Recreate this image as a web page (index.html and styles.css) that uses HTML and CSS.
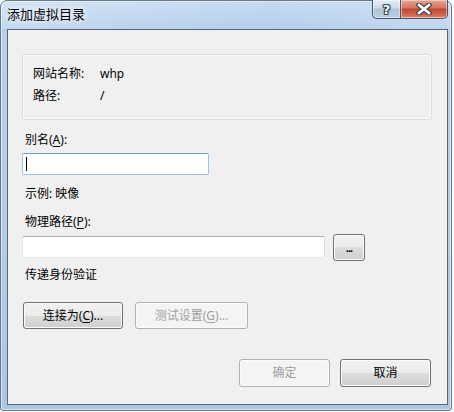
FILE: index.html
```html
<!DOCTYPE html>
<html lang="zh-CN">
<head>
<meta charset="utf-8">
<title>添加虚拟目录</title>
<link rel="stylesheet" href="styles.css">
</head>
<body>
<div class="window">
  <div class="titlebar">
    <span class="title">添加虚拟目录</span>
    <div class="caption-buttons">
      <div class="cap-btn help"><span class="help-glyph">?</span></div>
      <div class="cap-btn close">
        <svg width="16" height="12" viewBox="0 0 16 12">
          <path d="M3 2 L13 10 M13 2 L3 10" stroke="#3b4654" stroke-width="5" stroke-linecap="square" fill="none"/>
          <path d="M3 2 L13 10 M13 2 L3 10" stroke="#ffffff" stroke-width="2.6" stroke-linecap="square" fill="none"/>
        </svg>
      </div>
    </div>
  </div>
  <div class="client">
    <div class="groupbox">
      <div class="info-row"><span class="info-label">网站名称:</span><span class="info-value">whp</span></div>
      <div class="info-row"><span class="info-label">路径:</span><span class="info-value">/</span></div>
    </div>
    <div class="label first">别名(<u>A</u>):</div>
    <div class="textbox focused"><span class="caret"></span></div>
    <div class="label example">示例: 映像</div>
    <div class="label path-label">物理路径(<u>P</u>):</div>
    <div class="path-row">
      <div class="textbox path"></div>
      <div class="btn browse">...</div>
    </div>
    <div class="label pass">传递身份验证</div>
    <div class="btn-row">
      <div class="btn connect">连接为(<u>C</u>)...</div>
      <div class="btn test disabled">测试设置(<u>G</u>)...</div>
    </div>
    <div class="footer">
      <div class="btn dlg disabled">确定</div>
      <div class="btn dlg">取消</div>
    </div>
  </div>
</div>
</body>
</html>
```

FILE: styles.css
```css
html, body {
  margin: 0;
  padding: 0;
  background: #ffffff;
}

body {
  width: 454px;
  height: 412px;
  overflow: hidden;
  font-family: "Noto Sans", "Noto Sans CJK SC", sans-serif;
  font-size: 12px;
  color: #000;
}

.window {
  box-sizing: border-box;
  width: 452px;
  height: 411px;
  border: 1px solid #66778b;
  border-radius: 7px 7px 3px 3px;
  background: linear-gradient(to bottom, #cde0f4 0px, #b8d2ee 30px, #b4cee9 200px, #abc6e3 100%);
  box-shadow: inset 0 0 0 1px rgba(255, 255, 255, 0.55);
  display: flex;
  flex-direction: column;
}

.titlebar {
  height: 28px;
  display: flex;
  align-items: flex-start;
  background: linear-gradient(to right, rgba(255,255,255,0.12), rgba(120,150,190,0.08) 60%, rgba(255,255,255,0.1));
  border-radius: 6px 6px 0 0;
}

.title {
  padding: 5px 0 0 6px;
  font-family: "Noto Sans CJK SC", sans-serif;
  font-size: 13px;
  line-height: 16px;
  color: #000;
  text-shadow: 0 0 6px rgba(255, 255, 255, 0.95), 0 0 10px rgba(255, 255, 255, 0.8);
}

.caption-buttons {
  margin-left: auto;
  margin-right: 3px;
  margin-top: -1px;
  display: flex;
}

.cap-btn {
  box-sizing: border-box;
  height: 19px;
  border: 1px solid #4a5667;
  border-top: none;
  display: flex;
  align-items: center;
  justify-content: center;
  box-shadow: inset 0 0 0 1px rgba(255, 255, 255, 0.45);
}

.help {
  width: 28px;
  border-radius: 0 0 0 5px;
  border-right: none;
  background: linear-gradient(to bottom, #e4ecf5 0%, #ccdbeb 45%, #aec3da 50%, #bccfe3 100%);
}

.help-glyph {
  font-family: "DejaVu Sans", sans-serif;
  font-weight: bold;
  font-size: 13px;
  line-height: 15px;
  color: #ffffff;
  text-shadow: 1px 0 0 #3b4654, -1px 0 0 #3b4654, 0 1px 0 #3b4654, 0 -1px 0 #3b4654,
    1px 1px 0 #3b4654, -1px -1px 0 #3b4654, 1px -1px 0 #3b4654, -1px 1px 0 #3b4654;
}

.close {
  width: 48px;
  border-radius: 0 0 5px 0;
  background: linear-gradient(to bottom, #e8a493 0%, #d7745f 45%, #c4432c 50%, #d26a52 85%, #e08b6e 100%);
}

.close svg {
  display: block;
}

.client {
  box-sizing: border-box;
  width: 441px;
  height: 376px;
  margin-left: 6px;
  border: 1px solid #58677a;
  background: #f0f0f0;
  padding: 24px 15px 0 14px;
  display: flex;
  flex-direction: column;
  align-items: flex-start;
}

.groupbox {
  box-sizing: border-box;
  width: 410px;
  height: 66px;
  border: 1px solid #d5dfe5;
  border-radius: 3px;
  box-shadow: inset 0 0 0 1px #fbfbfb;
  padding: 8px 0 12px 10px;
}

.info-row {
  display: flex;
  line-height: 22px;
  height: 22px;
}

.info-label {
  width: 67px;
}

.info-value {
  color: #000;
}

.label {
  line-height: 16px;
  height: 16px;
  padding-left: 3px;
  white-space: nowrap;
}

.label u {
  text-decoration-thickness: 1px;
  text-underline-offset: 2px;
}

.label.first {
  margin-top: 12px;
}

.textbox {
  box-sizing: border-box;
  height: 22px;
  background: #ffffff;
  border-radius: 2px;
}

.textbox.focused {
  width: 187px;
  margin-top: 5px;
  border: 1px solid #9fc2e6;
  border-top-color: #6b9bd0;
  display: flex;
  align-items: center;
  padding-left: 3px;
}

.caret {
  display: block;
  width: 1px;
  height: 14px;
  background: #000;
}

.label.example {
  margin-top: 11px;
}

.label.path-label {
  margin-top: 12px;
}

.path-row {
  margin-top: 4px;
  display: flex;
  align-items: flex-start;
  gap: 8px;
  height: 27px;
}

.textbox.path {
  width: 303px;
  margin-top: 2px;
  border: 1px solid #e2e3ea;
  border-top-color: #abadb3;
  border-bottom-color: #e3e9ef;
  border-right-color: #dbdfe6;
}

.btn {
  box-sizing: border-box;
  height: 27px;
  border: 1px solid #707070;
  border-radius: 3px;
  background: linear-gradient(to bottom, #f2f2f2 0%, #ebebeb 50%, #dddddd 50%, #cfcfcf 100%);
  box-shadow: inset 0 0 0 1px #fcfcfc;
  display: flex;
  align-items: center;
  justify-content: center;
  font-size: 12px;
  line-height: 16px;
  color: #000;
  white-space: nowrap;
}

.btn u {
  text-decoration-thickness: 1px;
  text-underline-offset: 2px;
}

.btn.browse {
  width: 32px;
  font-weight: bold;
  font-size: 11px;
  letter-spacing: -1px;
  padding-top: 1px;
}

.btn.disabled {
  border-color: #adb2b5;
  background: #f4f4f4;
  box-shadow: inset 0 0 0 1px #fafafa;
  color: #a0a0a0;
}

.label.pass {
  margin-top: 6px;
}

.btn-row {
  margin-top: 19px;
  display: flex;
  gap: 12px;
  margin-left: 1px;
}

.btn.connect {
  width: 100px;
}

.btn.test {
  width: 113px;
}

.footer {
  margin-top: 30px;
  align-self: flex-end;
  margin-right: 1px;
  display: flex;
  gap: 10px;
}

.btn.dlg {
  width: 91px;
  height: 28px;
}
```
